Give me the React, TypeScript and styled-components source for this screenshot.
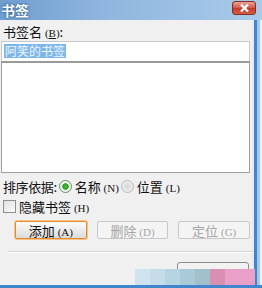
import React from "react";
import styled, { createGlobalStyle } from "styled-components";

const Global = createGlobalStyle`
  html, body { margin: 0; padding: 0; background: #f0f0f0; }
  body { font-family: "Noto Sans CJK SC", "Noto Sans", sans-serif; }
`;

const Window = styled.div`
  width: 262px;
  height: 288px;
  display: flex;
  flex-direction: column;
  background: #f0f0f0;
  position: relative;
  overflow: hidden;
`;

const TitleBar = styled.div`
  height: 20px;
  display: flex;
  align-items: flex-start;
  justify-content: space-between;
  background: linear-gradient(90deg, #6f9dcf 0%, #8fb6de 40%, #a9cbea 100%);
  padding-right: 6px;
`;

const Title = styled.div`
  color: #fff;
  font-size: 14px;
  font-weight: 700;
  line-height: 18px;
  padding: 1px 0 0 1px;
  text-shadow: 0 0 3px #2b5a8a, 0 0 1px #2b5a8a;
`;

const CloseButton = styled.div`
  width: 24px;
  height: 14px;
  margin-top: 1px;
  box-sizing: border-box;
  border: 1px solid #8a2c22;
  border-radius: 3px;
  background: linear-gradient(180deg, #e9a497 0%, #d5594a 48%, #c53a28 52%, #d0604a 100%);
  display: flex;
  align-items: center;
  justify-content: center;
`;

const Main = styled.div`
  flex: 1;
  display: flex;
`;

const Body = styled.div`
  width: 254px;
  display: flex;
  flex-direction: column;
  padding: 4px 2px 0 1px;
  box-sizing: border-box;
  border-right: 2px solid #e6ecf2;
`;

const RightFrame = styled.div`
  width: 6px;
  display: flex;
`;

const FrameDark = styled.div`
  width: 3px;
  background: #3f86cc;
`;

const FrameLight = styled.div`
  flex: 1;
  background: #a6c9e7;
`;

const BottomFrame = styled.div`
  height: 3px;
  background: #3f86cc;
`;

const Label = styled.div`
  font-size: 13px;
  line-height: 15px;
  height: 15px;
  color: #111;
  padding-left: 2px;
  white-space: nowrap;
`;

const Latin = styled.span`
  font-family: "Liberation Serif", serif;
  font-size: 11px;
`;

const Input = styled.div`
  margin-top: 2px;
  height: 20px;
  box-sizing: border-box;
  border: 1px solid #c8c8c8;
  border-bottom: none;
  background: #fff;
  padding: 2px 0 0 2px;
  display: flex;
`;

const Selected = styled.span`
  background: #7db6ea;
  color: #eef6ff;
  font-size: 12px;
  line-height: 14px;
  height: 14px;
  padding: 0 1px;
`;

const ListBox = styled.div`
  height: 112px;
  box-sizing: border-box;
  border: 1px solid #a0a0a0;
  border-top: 2px solid #9a9a9a;
  background: #fff;
`;

const Row = styled.div<{ $top: number }>`
  display: flex;
  align-items: center;
  margin-top: ${(p) => p.$top}px;
  height: 16px;
  font-size: 13px;
  color: #111;
  white-space: nowrap;
`;

const RowLabel = styled.span`
  padding-left: 2px;
  margin-right: 2px;
  letter-spacing: -0.4px;
`;

const Radio = styled.span<{ $checked?: boolean }>`
  width: 11px;
  height: 11px;
  border-radius: 50%;
  border: 1px solid ${(p) => (p.$checked ? "#6a8a6a" : "#b8b8b8")};
  background: ${(p) =>
    p.$checked
      ? "radial-gradient(circle, #4fbf3a 0%, #2f9a2a 38%, #e8f3e6 44%, #fafafa 100%)"
      : "radial-gradient(circle, #d8d8d8 0%, #e6e6e6 50%, #f6f6f6 100%)"};
  margin-right: 3px;
  flex: none;
`;

const Option = styled.span`
  margin-right: 2px;
`;

const CheckBox = styled.span`
  width: 11px;
  height: 11px;
  border: 1px solid #8e8f8f;
  background: linear-gradient(135deg, #e0e0e0 0%, #fafafa 100%);
  margin: 0 3px 0 2px;
  flex: none;
`;

const Buttons = styled.div`
  display: flex;
  gap: 10px;
  margin-top: 7px;
  padding-left: 14px;
`;

const Button = styled.div<{ $primary?: boolean; $disabled?: boolean }>`
  width: 72px;
  height: 18px;
  box-sizing: border-box;
  border: 1px solid ${(p) => (p.$primary ? "#e38a2e" : "#c8c8c8")};
  box-shadow: ${(p) => (p.$primary ? "0 0 0 1px #f5c486" : "none")};
  border-radius: 2px;
  background: ${(p) =>
    p.$disabled
      ? "#f4f4f4"
      : "linear-gradient(180deg, #fbfbfb 0%, #ececec 50%, #dcdcdc 100%)"};
  color: ${(p) => (p.$disabled ? "#a6a6a6" : "#111")};
  font-size: 13px;
  display: flex;
  align-items: center;
  justify-content: center;
  white-space: nowrap;
`;

const Separator = styled.div`
  margin: 12px 0 0 7px;
  width: 245px;
  height: 1px;
  background: #d5d5d5;
  border-bottom: 1px solid #ffffff;
`;

const BottomButtons = styled.div`
  display: flex;
  justify-content: flex-end;
  margin-top: 9px;
  padding-right: 1px;
`;

const GhostButton = styled.div`
  width: 72px;
  height: 18px;
  box-sizing: border-box;
  border: 1px solid #8c8c8c;
  border-radius: 3px;
  background: #f2f2f2;
`;

const Watermark = styled.div`
  position: absolute;
  left: 135px;
  bottom: 3px;
  width: 120px;
  height: 16px;
  display: flex;
`;

const Block = styled.div<{ $c: string; $w: number }>`
  width: ${(p) => p.$w}px;
  background: ${(p) => p.$c};
`;

const blocks: [string, number][] = [
  ["#cfe3ee", 15],
  ["#c6dde9", 15],
  ["#b6d5e2", 15],
  ["#a9cbd8", 15],
  ["#a2c0cc", 15],
  ["#d98fb1", 15],
  ["#e8a0c8", 30],
];

export default function App() {
  return (
    <Window>
      <Global />
      <TitleBar>
        <Title>书签</Title>
        <CloseButton>
          <svg width="9" height="8" viewBox="0 0 9 8">
            <path d="M1 0.5 L8 7.5 M8 0.5 L1 7.5" stroke="#fff" strokeWidth="2.2" />
          </svg>
        </CloseButton>
      </TitleBar>
      <Main>
        <Body>
          <Label>
            书签名 <Latin>(<u>B</u>)</Latin>:
          </Label>
          <Input>
            <Selected>阿笑的书签</Selected>
          </Input>
          <ListBox />
          <Row $top={5}>
            <RowLabel>排序依据:</RowLabel>
            <Radio $checked />
            <Option>
              名称 <Latin>(N)</Latin>
            </Option>
            <Radio />
            <Option>
              位置 <Latin>(L)</Latin>
            </Option>
          </Row>
          <Row $top={4}>
            <CheckBox />
            <span>
              隐藏书签 <Latin>(H)</Latin>
            </span>
          </Row>
          <Buttons>
            <Button $primary>
              <span>
                添加 <Latin>(A)</Latin>
              </span>
            </Button>
            <Button $disabled>
              <span>
                删除 <Latin>(D)</Latin>
              </span>
            </Button>
            <Button $disabled>
              <span>
                定位 <Latin>(G)</Latin>
              </span>
            </Button>
          </Buttons>
          <Separator />
          <BottomButtons>
            <GhostButton />
          </BottomButtons>
        </Body>
        <RightFrame>
          <FrameDark />
          <FrameLight />
        </RightFrame>
      </Main>
      <BottomFrame />
      <Watermark>
        {blocks.map(([c, w], i) => (
          <Block key={i} $c={c} $w={w} />
        ))}
      </Watermark>
    </Window>
  );
}
